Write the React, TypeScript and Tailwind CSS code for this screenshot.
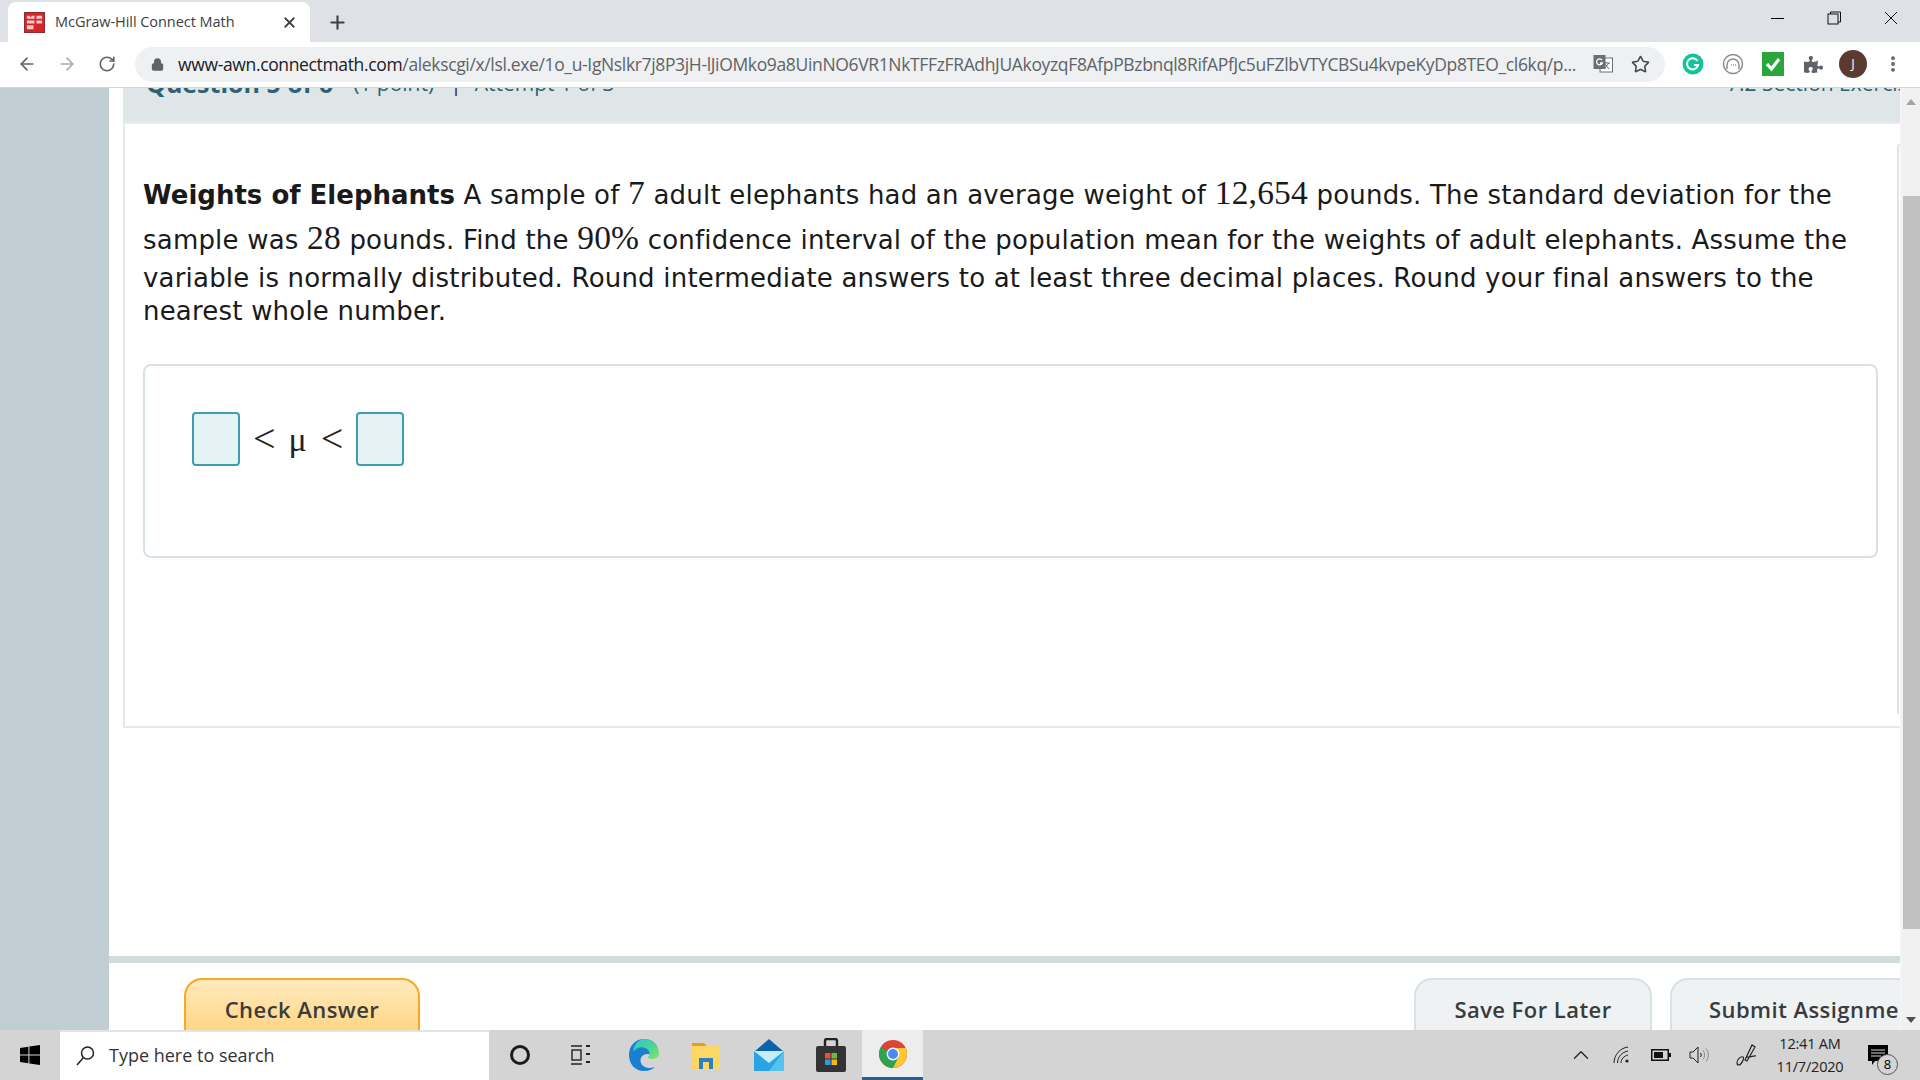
/**
 * Connect Math question page inside a Chrome window on the Windows desktop.
 */

import {
  ArrowLeft,
  ArrowRight,
  ChevronUp,
  Lock,
  MoreVertical,
  Plus,
  RotateCw,
  Star,
  X,
} from "lucide-react";
import { FaPuzzlePiece } from "react-icons/fa";

const URL_TEXT =
  "/alekscgi/x/lsl.exe/1o_u-IgNslkr7j8P3jH-lJiOMko9a8UinNO6VR1NkTFFzFRAdhJUAkoyzqF8AfpPBzbnql8RifAPfJc5uFZlbVTYCBSu4kvpeKyDp8TEO_cl6kq/p...";

function Favicon() {
  return (
    <svg width="21" height="21" viewBox="0 0 22 22" className="shrink-0">
      <rect width="22" height="22" fill="#d8232a" />
      <rect x="0" y="0" width="22" height="22" fill="none" stroke="#3a3a3a" strokeWidth="1" />
      <path d="M3 4h3l1 2 1-2h3v3H3zM13 4h6v3h-6zM3 9h8v3H3zM13 9h6v3h-6zM3 14h7v4H3z" fill="#f6c9c9" />
    </svg>
  );
}

function WindowControls() {
  return (
    <div className="flex items-center">
      <div className="flex h-[36px] w-[56px] items-center justify-center">
        <div className="h-px w-[13px] bg-black" />
      </div>
      <div className="flex h-[36px] w-[57px] items-center justify-center">
        <svg width="14" height="14" viewBox="0 0 14 14" fill="none" stroke="#111" strokeWidth="1">
          <rect x="1" y="3" width="10" height="10" />
          <path d="M3.5 3V1h10v10H11" />
        </svg>
      </div>
      <div className="flex h-[36px] w-[58px] items-center justify-center">
        <svg width="14" height="14" viewBox="0 0 14 14" stroke="#111" strokeWidth="1">
          <path d="M1 1l12 12M13 1L1 13" />
        </svg>
      </div>
    </div>
  );
}

function TabStrip() {
  return (
    <div className="flex h-[42px] items-end justify-between bg-[#dee1e6] pl-[8px]">
      <div className="flex items-center">
        <div className="flex h-[40px] w-[302px] items-center rounded-t-lg bg-white pl-[16px] pr-[12px]">
          <Favicon />
          <span className="ml-[10px] flex-1 font-['Open_Sans'] text-[14.5px] tracking-[-0.05px] text-[#3c4043]">
            McGraw-Hill Connect Math
          </span>
          <X size={17} strokeWidth={2.6} className="text-[#3c4043]" />
        </div>
        <Plus size={21} strokeWidth={2.4} className="ml-[17px] text-[#3c4043]" />
      </div>
      <div className="self-start">
        <WindowControls />
      </div>
    </div>
  );
}

function GrammarlyIcon() {
  return (
    <svg width="22" height="22" viewBox="0 0 22 22">
      <circle cx="11" cy="11" r="10.5" fill="#15c39a" />
      <path d="M15.5 8a5.6 5.6 0 1 0 .6 4h-4" fill="none" stroke="#fff" strokeWidth="2" />
    </svg>
  );
}

function HeadphoneIcon() {
  return (
    <svg width="22" height="22" viewBox="0 0 22 22" fill="none" stroke="#8d8d8d" strokeWidth="1.5">
      <circle cx="11" cy="11" r="9.5" />
      <path d="M5 16v-4a6 6 0 0 1 12 0v4" />
      <path d="M9 12h.8M11 12h.8M13 12h.8" />
    </svg>
  );
}

function CheckExtensionIcon() {
  return (
    <svg width="22" height="24" viewBox="0 0 22 24">
      <rect width="22" height="24" fill="#2aa63c" />
      <path d="M5 12l4.5 5L17 7" fill="none" stroke="#fff" strokeWidth="3.2" />
    </svg>
  );
}

function TranslateIcon() {
  return (
    <svg width="20" height="20" viewBox="0 0 20 20">
      <rect x="7" y="4" width="12.5" height="14" fill="#fff" stroke="#6b6f73" />
      <rect x="0.5" y="1" width="12" height="14" fill="#6b6f73" />
      <path d="M9 6a3 3 0 1 0 .4 3H7" fill="none" stroke="#fff" strokeWidth="1.3" />
      <path d="M11 9h6M14 8v1M16 9l-5 6M12 10l4 5" fill="none" stroke="#6b6f73" />
    </svg>
  );
}

function Toolbar() {
  return (
    <div className="flex h-[46px] items-center border-b border-[#d3d6d9] bg-white pb-[1px]">
      <div className="flex w-[135px] items-center pl-[17px] text-[#5f6368]">
        <ArrowLeft size={20} strokeWidth={2} />
        <ArrowRight size={20} strokeWidth={2} className="ml-[20px] text-[#a8abaf]" />
        <RotateCw size={18} strokeWidth={2.2} className="ml-[21px]" />
      </div>
      <div className="flex h-[35px] w-[1530px] items-center rounded-full bg-[#eef0f2] pl-[16px] pr-[12px]">
        <Lock size={13} strokeWidth={3} className="text-[#5f6368]" fill="#5f6368" />
        <div className="ml-[14px] w-[1398px] whitespace-nowrap font-['Open_Sans'] text-[17.5px] tracking-[-0.35px] text-[#5f6368]">
          <span className="text-[#202124]">www-awn.connectmath.com</span>
          {URL_TEXT}
        </div>
        <div className="ml-[17px]">
          <TranslateIcon />
        </div>
        <Star size={19} strokeWidth={2} className="ml-[18px] text-[#44474a]" />
      </div>
      <div className="flex flex-1 items-center pl-[17px]">
        <GrammarlyIcon />
        <div className="ml-[18px]">
          <HeadphoneIcon />
        </div>
        <div className="ml-[18px]">
          <CheckExtensionIcon />
        </div>
        <FaPuzzlePiece size={19} className="ml-[20px] text-[#5f6368]" />
        <div className="ml-[16px] flex h-[28px] w-[28px] items-center justify-center rounded-full bg-[#5b3a30] font-['Open_Sans'] text-[13px] text-white">
          J
        </div>
        <MoreVertical size={20} strokeWidth={2.6} className="ml-[16px] text-[#5f6368]" />
      </div>
    </div>
  );
}

function AnswerInput() {
  return <div className="h-[54px] w-[48px] rounded-[4px] border-2 border-[#3f9db0] bg-[#e5f3f7]" />;
}

function Num({ children }: { children: string }) {
  return (
    <span className="inline-block pb-[8px] pt-[4px] font-['Liberation_Serif'] text-[33.5px] leading-[33px]">
      {children}
    </span>
  );
}

function QuestionCard() {
  return (
    <div className="flex h-[604px] border-b-2 border-l-2 border-[#e3e9ec] bg-white">
      <div className="min-w-0 flex-1 pl-[18px] pr-[19px]">
        <p className="pt-[48px] font-['DejaVu_Sans'] text-[26px] leading-[33px] tracking-[0.2px] text-[#1a1a1a]">
          <span className="font-bold tracking-normal">Weights of Elephants</span> A sample of <Num>7</Num> adult
          elephants had an average weight of <Num>12,654</Num> pounds. The standard deviation for the sample was{" "}
          <Num>28</Num> pounds. Find the <Num>90%</Num> confidence interval of the population mean for the weights of
          adult elephants. Assume the variable is normally distributed. Round intermediate answers to at least three
          decimal places. Round your final answers to the nearest whole number.
        </p>
        <div className="mt-[36px] h-[194px] rounded-lg border-2 border-[#d8e1e4] pl-[47px] pt-[46px]">
          <div className="flex items-center font-['Liberation_Serif'] text-[34px] text-[#222]">
            <AnswerInput />
            <span className="ml-[13px] text-[40px] leading-[40px]">&lt;</span>
            <span className="ml-[13px]">μ</span>
            <span className="ml-[14px] mr-[13px] text-[40px] leading-[40px]">&lt;</span>
            <AnswerInput />
          </div>
        </div>
      </div>
      {/* Left edge of the next panel, cut off by the scrollbar */}
      <div className="mb-[12px] mt-[20px] w-[3px] rounded-tl-md border-l-2 border-t-2 border-[#dbe4e7]" />
    </div>
  );
}

function Footer() {
  return (
    <div className="mt-[228px] border-t-[7px] border-[#d2dcdf] bg-white">
      <div className="flex items-start justify-between pl-[75px] pt-[15px] font-['Open_Sans'] text-[22px] font-semibold tracking-[0.45px] text-[#3b3b3b]">
        <div className="flex h-[70px] w-[236px] justify-center rounded-t-[18px] border-2 border-[#f9a825] bg-gradient-to-b from-[#ffeabd] to-[#ffcf70] pt-[13px]">
          Check Answer
        </div>
        <div className="flex">
          <div className="flex h-[70px] w-[238px] justify-center rounded-t-[18px] border-2 border-[#d8e1e4] bg-[#eef2f3] pt-[13px]">
            Save For Later
          </div>
          <div className="ml-[18px] h-[70px] w-[230px] overflow-hidden whitespace-nowrap rounded-tl-[18px] border-l-2 border-t-2 border-[#d8e1e4] bg-[#eef2f3] pl-[37px] pt-[13px]">
            Submit Assignment
          </div>
        </div>
      </div>
    </div>
  );
}

function PageHeader() {
  return (
    <div className="flex h-[57px] items-start justify-between overflow-hidden border-b-2 border-[#e6ecee] bg-[#dfe6e8] pl-[23px] pt-[1px] font-['Open_Sans'] text-[21px] leading-[30px] text-[#2f6172]">
      <div className="flex items-center whitespace-nowrap">
        <span className="text-[25px] font-bold">Question 5 of 6</span>
        <span className="ml-[20px]">(1 point)</span>
        <span className="ml-[16px] mr-[13px] text-[#333]">|</span>
        <span>Attempt 1 of 3</span>
      </div>
      <div className="w-[173px] overflow-hidden whitespace-nowrap">7.2 Section Exercises</div>
    </div>
  );
}

function Scrollbar() {
  return (
    <div className="flex w-[20px] flex-col items-center border-l-2 border-[#f4f4f4] bg-[#f1f1f1]">
      <div className="mt-[11px] h-0 w-0 border-x-[5px] border-b-[6px] border-x-transparent border-b-[#a3a3a3]" />
      <div className="mt-[91px] h-[733px] w-[17px] bg-[#c1c1c1]" />
      <div className="mt-[88px] h-0 w-0 border-x-[5px] border-t-[6px] border-x-transparent border-t-[#505050]" />
    </div>
  );
}

function WindowsLogo() {
  return (
    <svg width="20" height="20" viewBox="0 0 20 20" fill="#000">
      <path d="M0 3l8.4-1.2v7.6H0zM9.4 1.6L20 0v9.4H9.4zM0 10.4h8.4v7.8L0 17zM9.4 10.4H20V20L9.4 18.4z" />
    </svg>
  );
}

function SearchGlass() {
  return (
    <svg width="22" height="22" viewBox="0 0 22 22" fill="none" stroke="#222" strokeWidth="1.5">
      <circle cx="13.5" cy="8" r="6" />
      <path d="M9.5 12.5L3 20" />
    </svg>
  );
}

function TaskView() {
  return (
    <svg width="20" height="20" viewBox="0 0 20 20" fill="none" stroke="#222" strokeWidth="1.4">
      <path d="M0 1h11M0 19h11" />
      <rect x="1" y="5" width="9" height="10" />
      <path d="M15 1h4M17 3v0M15 9h4M15 17h4" strokeWidth="2" />
    </svg>
  );
}

function EdgeIcon() {
  return (
    <svg width="30" height="32" viewBox="0 0 30 32">
      <defs>
        <linearGradient id="edgeFill" x1="0" y1="0" x2="1" y2="1">
          <stop offset="0" stopColor="#2fc5d8" />
          <stop offset="0.6" stopColor="#4fd88c" />
          <stop offset="1" stopColor="#8ee26a" />
        </linearGradient>
      </defs>
      <path d="M15 0C6 0 0 7 0 16c0 9 6 16 15 16 5 0 9-2 11-4-5 2-12 1-14-4-2-5 2-9 6-9h11C30 6 24 0 15 0z" fill="#1a7fd0" />
      <path d="M15 0c8 0 15 6 15 15 0 3-3 5-7 5-2 0-4-1-4-2 2-2 2-6-1-8-4-3-11-2-14 3C5 5 10 0 15 0z" fill="url(#edgeFill)" />
    </svg>
  );
}

function ExplorerIcon() {
  return (
    <svg width="28" height="28" viewBox="0 0 28 28">
      <path d="M0 2h12l3 3h13v4H0z" fill="#e2a013" />
      <rect y="5" width="28" height="23" fill="#fcd765" />
      <path d="M7 28V17h14v11h-4v-7h-6v7z" fill="#2f7fc4" />
    </svg>
  );
}

function MailIcon() {
  return (
    <svg width="30" height="32" viewBox="0 0 30 32">
      <path d="M15 0l15 13H0z" fill="#0d62ab" />
      <rect y="12" width="30" height="20" fill="#2ba4e6" />
      <path d="M0 12h30L15 24z" fill="#c7ecfb" />
      <path d="M30 12v20H15z" fill="#57c1f0" />
    </svg>
  );
}

function StoreIcon() {
  return (
    <svg width="30" height="34" viewBox="0 0 30 34">
      <path d="M9 8V3a2 2 0 0 1 2-2h8a2 2 0 0 1 2 2v5" fill="none" stroke="#222" strokeWidth="2.4" />
      <rect y="8" width="30" height="26" rx="2" fill="#333" />
      <rect x="9" y="15" width="5.5" height="5.5" fill="#e8503a" />
      <rect x="15.5" y="15" width="5.5" height="5.5" fill="#74b83d" />
      <rect x="9" y="21.5" width="5.5" height="5.5" fill="#1fa0e8" />
      <rect x="15.5" y="21.5" width="5.5" height="5.5" fill="#fbb813" />
    </svg>
  );
}

function ChromeIcon() {
  return (
    <svg width="28" height="28" viewBox="0 0 28 28">
      <circle cx="14" cy="14" r="14" fill="#db4437" />
      <path d="M14 14L2 7A14 14 0 0 0 14 28l7-11z" fill="#2fa14f" />
      <path d="M14 8h12.6A14 14 0 0 1 14 28l6-12z" fill="#fcc934" />
      <circle cx="14" cy="14" r="6.4" fill="#fff" />
      <circle cx="14" cy="14" r="5" fill="#4a8af4" />
    </svg>
  );
}

function WifiIcon() {
  return (
    <svg width="18" height="18" viewBox="0 0 18 18" fill="none" stroke="#222" strokeWidth="1">
      <path d="M1 17C1 9 7 2 15 1M4.5 17C4.5 11 9 6 15 5M8 17c0-4 3-7 7-8" />
      <circle cx="14" cy="15" r="1.6" fill="#222" stroke="none" />
    </svg>
  );
}

function BatteryIcon() {
  return (
    <svg width="20" height="12" viewBox="0 0 20 12">
      <rect x="0.75" y="0.75" width="16.5" height="10.5" fill="none" stroke="#111" strokeWidth="1.5" />
      <rect x="3" y="3" width="9" height="6" fill="#111" />
      <rect x="18" y="4" width="2" height="4" fill="#111" />
    </svg>
  );
}

function VolumeIcon() {
  return (
    <svg width="20" height="18" viewBox="0 0 20 18" fill="none" stroke="#222" strokeWidth="1">
      <path d="M1 6h3l5-5v16l-5-5H1z" />
      <path d="M11.5 7a3 3 0 0 1 0 4" />
      <path d="M14 4.5a7 7 0 0 1 0 9M17 2.5a10 10 0 0 1 0 13" stroke="#8c8c8c" />
    </svg>
  );
}

function PenIcon() {
  return (
    <svg width="22" height="24" viewBox="0 0 22 24" fill="none" stroke="#222" strokeWidth="1.2">
      <path d="M9 17L16 2l3 2-8 14zM1 20c0-4 4-7 6-6s-2 8-4 8-2-1-2-2zM11 14c3 1 7-2 9-1" />
    </svg>
  );
}

function Taskbar() {
  const centered = "flex h-full items-center justify-center";
  return (
    <div className="flex h-[50px] items-center bg-[#d4d4d4]">
      <div className={`${centered} w-[60px]`}>
        <WindowsLogo />
      </div>
      <div className="flex h-full w-[429px] items-center border-t-2 border-[#e4e4e4] bg-white pl-[14px]">
        <SearchGlass />
        <span className="ml-[13px] pb-[2px] font-['Open_Sans'] text-[18px] text-[#333]">Type here to search</span>
      </div>
      <div className={`${centered} w-[61px]`}>
        <div className="h-[20px] w-[20px] rounded-full border-[3px] border-[#1c1c1c]" />
      </div>
      <div className={`${centered} w-[62px]`}>
        <TaskView />
      </div>
      <div className={`${centered} w-[63px]`}>
        <EdgeIcon />
      </div>
      <div className={`${centered} w-[62px]`}>
        <ExplorerIcon />
      </div>
      <div className={`${centered} w-[63px]`}>
        <MailIcon />
      </div>
      <div className={`${centered} w-[62px]`}>
        <StoreIcon />
      </div>
      <div className={`${centered} w-[61px] border-b-[3px] border-[#2a5f8f] bg-[#ededed]`}>
        <ChromeIcon />
      </div>
      <div className="flex h-full flex-1 items-center pl-[645px] text-[#222]">
        <ChevronUp size={26} strokeWidth={1.2} />
        <div className="ml-[19px]">
          <WifiIcon />
        </div>
        <div className="ml-[20px]">
          <BatteryIcon />
        </div>
        <div className="ml-[18px]">
          <VolumeIcon />
        </div>
        <div className="ml-[27px]">
          <PenIcon />
        </div>
        <div className="ml-[8px] w-[88px] text-center font-['Open_Sans'] text-[14.5px] leading-[23px] tracking-[-0.2px] text-[#222]">
          <div>12:41 AM</div>
          <div>11/7/2020</div>
        </div>
        <div className="relative ml-[14px]">
          <svg width="20" height="20" viewBox="0 0 20 20">
            <path d="M0 0h20v16H7l-3 4v-4H0z" fill="#000" />
            <path d="M3 5h14M3 8h14M3 11h10" stroke="#d4d4d4" strokeWidth="1" />
          </svg>
          <div className="absolute left-[9px] top-[9px] flex h-[21px] w-[21px] items-center justify-center rounded-full border border-[#555] bg-[#d4d4d4] font-['Open_Sans'] text-[13px] text-black">
            8
          </div>
        </div>
      </div>
    </div>
  );
}

export default function App() {
  return (
    <div className="flex h-screen flex-col overflow-hidden bg-white">
      <div className="relative z-10">
        <TabStrip />
        <Toolbar />
      </div>
      <div className="flex min-h-0 flex-1">
        <div className="w-[109px] bg-[#c1ced4]" />
        {/* The page is scrolled, so its header is partly under the toolbar */}
        <div className="-mt-[21px] min-w-0 flex-1">
          <div className="ml-[14px]">
            <PageHeader />
            <QuestionCard />
          </div>
          <Footer />
        </div>
        <Scrollbar />
      </div>
      <div className="relative z-10">
        <Taskbar />
      </div>
    </div>
  );
}
